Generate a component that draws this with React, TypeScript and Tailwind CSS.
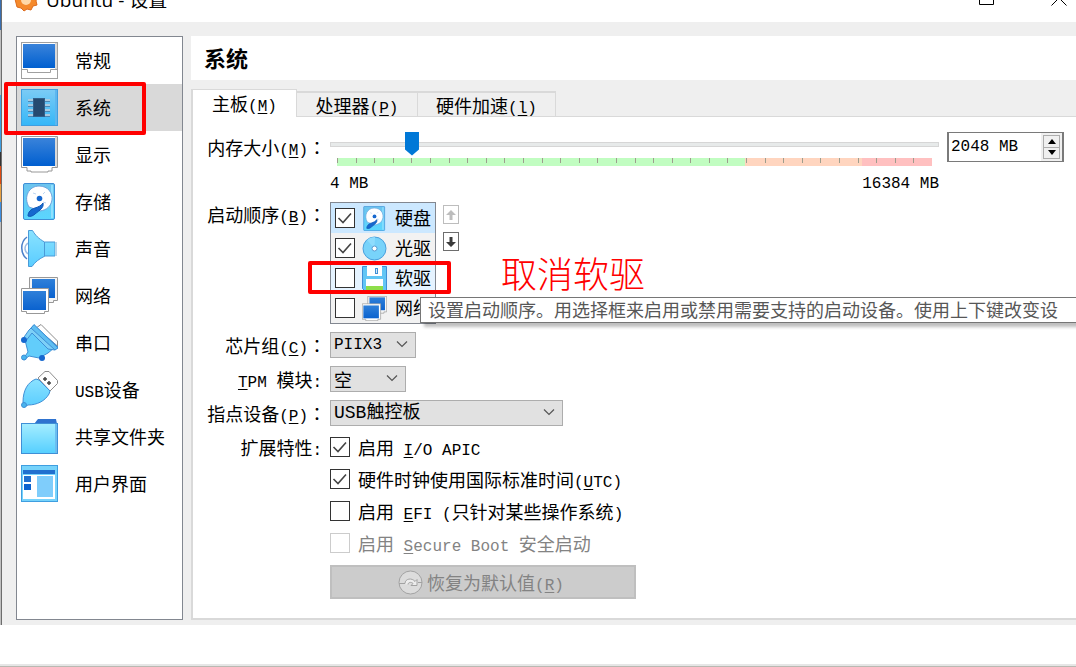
import { ReactNode, useState } from "react";
import clsx from "clsx";

const DiskIcon = ({ className }: { className?: string }) => (
  <svg viewBox="0 0 37 37" className={className}>
    <defs>
      <linearGradient id="disk" x1="0" y1="0" x2="0" y2="1">
        <stop offset="0" stopColor="#6cc4ee" />
        <stop offset="1" stopColor="#5ad6ff" />
      </linearGradient>
    </defs>
    <rect x="2.5" y="0.5" width="31" height="36" rx="1.5" fill="url(#disk)" stroke="#3f8fd6" />
    <path d="M31 2v33" stroke="#8fe0ff" strokeWidth="2" />
    <path d="M8 24C2 14 8 3 18 3c9 0 14 7 13 14-1 6-5 10-12 11z" fill="#fff" stroke="#6aa2dc" />
    <path d="M22 20c1 5-3 7-8 11-2 2-5 3-7 2 0-4 3-7 7-8 3-1 6-2 8-5z" fill="#1668cf" stroke="#0f57b4" />
    <circle cx="18.500" cy="15.500" r="2.800" fill="#1668cf" />
    <path d="M12 10l3 1M24 9l-2 2M25 20l-3-1" stroke="#bcd6f2" />
  </svg>
);

const NetworkIcon = ({ className }: { className?: string }) => (
  <svg viewBox="0 0 37 37" className={className}>
    <defs>
      <linearGradient id="net" x1="0" y1="0" x2="0" y2="1">
        <stop offset="0" stopColor="#2f80d9" />
        <stop offset="1" stopColor="#0a62cf" />
      </linearGradient>
    </defs>
    <path d="M8.500 0.500h28v23h-4v2h-12v-2h-12z" fill="#f5f5f5" stroke="#989898" />
    <rect x="11" y="2" width="23" height="19" fill="url(#net)" />
    <path d="M0.500 11.500h27v23h-4v2h-18v-2h-5z" fill="#fff" stroke="#989898" />
    <rect x="2" y="14" width="23" height="19" fill="url(#net)" />
  </svg>
);

const GeneralIcon = () => (
  <svg viewBox="0 0 37 37" className="size-[37px]">
    <defs>
      <linearGradient id="screen" x1="0" y1="0" x2="0" y2="1">
        <stop offset="0" stopColor="#3a83da" />
        <stop offset="1" stopColor="#005fd0" />
      </linearGradient>
    </defs>
    <rect x="0.500" y="0.500" width="36" height="36" fill="#fff" stroke="#a0a0a0" />
    <rect x="34" y="1" width="2" height="26" fill="#d9d9d9" />
    <rect x="2" y="2" width="32" height="24" fill="url(#screen)" />
    <path d="M0 27.500h6.500v3h23v-3H37" fill="none" stroke="#a0a0a0" />
  </svg>
);

const ChipIcon = () => (
  <svg viewBox="0 0 37 37" className="size-[37px]">
    <defs>
      <linearGradient id="chip" x1="0" y1="0" x2="0" y2="1">
        <stop offset="0" stopColor="#7ccbf5" />
        <stop offset="1" stopColor="#34b7f8" />
      </linearGradient>
    </defs>
    <rect x="0.500" y="0.500" width="36" height="36" fill="url(#chip)" stroke="#3f9ee0" />
    <path d="M35 1v35" stroke="#5db6ee" strokeWidth="2" />
    <path d="M7 11h22M7 16h22M7 21h22M7 26h22" stroke="#a9c9df" strokeWidth="2" />
    <path d="M7 12.500h22M7 17.500h22M7 22.500h22M7 27.500h22" stroke="#4a87b5" />
    <rect x="12.500" y="9.500" width="11" height="18" fill="#254a70" stroke="#325f8a" />
  </svg>
);

const DisplayIcon = () => (
  <svg viewBox="0 0 37 37" className="size-[37px]">
    <path d="M0.500 0.500h36v31H31v3.500h-4v1H10v-1H6v-3.500H0.500z" fill="#fff" stroke="#989898" />
    <path d="M35 1v30" stroke="#d9d9d9" strokeWidth="2" />
    <rect x="2" y="2" width="32" height="28" fill="url(#screen)" />
  </svg>
);

const AudioIcon = () => (
  <svg viewBox="0 0 37 37" className="size-[37px]">
    <defs>
      <linearGradient id="audio" x1="0" y1="0" x2="0" y2="1">
        <stop offset="0" stopColor="#8ae2ff" />
        <stop offset="1" stopColor="#5acdff" />
      </linearGradient>
    </defs>
    <path d="M6 7C-1 12-1 24 6 29" fill="none" stroke="#4a7fc9" strokeWidth="1.500" />
    <path d="M7 13c-4 3-4 8 0 11" fill="none" stroke="#9dbde6" strokeWidth="1.500" />
    <path d="M7.500 0.500h4c3 5 6 8 12 11.500h10.500v14H24c-6 3-10 6-13 10.500H7.500z" fill="url(#audio)" stroke="#4b9ad8" />
    <path d="M23.500 12v14" stroke="#4b9ad8" />
    <path d="M35 12v14" stroke="#bcd6e8" strokeWidth="2" />
  </svg>
);

const SerialIcon = () => (
  <svg viewBox="0 0 37 37" className="size-[37px]">
    <path d="M15 4l5-3.500L36.500 17v5z" fill="#fff" stroke="#8c8c8c" />
    <path d="M2 35l5-7-3-12L14 4l19 20-6 5-9 5-10-2-5 4z" fill="#62cdfb" stroke="#3f8fd6" />
    <path d="M8 6l5-5 24 22-3 3-7-1L11 9l-7 9-3-2z" fill="#7dd0f7" stroke="#3f8fd6" />
    <path d="M13 0.500L37 24l-3 2L10 4z" fill="#60bff2" stroke="#3f8fd6" />
    <circle cx="3" cy="16" r="3" fill="#1668cf" />
    <circle cx="21" cy="34" r="3" fill="#1668cf" />
    <circle cx="3" cy="33.500" r="2.500" fill="#49b4ee" stroke="#3f8fd6" />
  </svg>
);

const UsbIcon = () => (
  <svg viewBox="0 0 37 37" className="size-[37px]">
    <path d="M17 7l7-6.500h4l8.500 9v3L29 20z" fill="#fff" stroke="#8c8c8c" />
    <path d="M22 8h4M24 6v4M26 12h4M28 10v4" stroke="#444" strokeWidth="1.500" />
    <path d="M2 31C2 19 7 11 15 8l3 1 11 11-1 3c-4 7-12 11-21 11l-4 2z" fill="url(#audio)" stroke="#3f8fd6" />
    <circle cx="3" cy="34" r="2.500" fill="#49b4ee" stroke="#3f8fd6" />
  </svg>
);

const FolderIcon = () => (
  <svg viewBox="0 0 37 37" className="size-[37px]">
    <defs>
      <linearGradient id="folder" x1="0" y1="0" x2="0" y2="1">
        <stop offset="0" stopColor="#a5edff" />
        <stop offset="1" stopColor="#55cfff" />
      </linearGradient>
    </defs>
    <path d="M13 6l4-5h18l1 5z" fill="#2f73cf" />
    <rect x="0.500" y="5.500" width="36" height="30" fill="url(#folder)" stroke="#3f8fd6" />
    <path d="M35 6v29" stroke="#6bbdf0" strokeWidth="2" />
  </svg>
);

const InterfaceIcon = () => (
  <svg viewBox="0 0 37 37" className="size-[37px]">
    <rect x="0.500" y="0.500" width="36" height="36" fill="#76d3fb" stroke="#3f9ee0" />
    <rect x="2" y="5" width="32" height="4" fill="#2170cf" />
    <rect x="2" y="10" width="32" height="24" fill="#fff" />
    <rect x="3" y="11" width="7" height="6" fill="#2170cf" />
    <rect x="3" y="19" width="7" height="6" fill="#0a62cf" />
    <rect x="16" y="11" width="16" height="21" fill="#7fcdfb" />
  </svg>
);

const CdIcon = () => (
  <svg viewBox="0 0 25 25" className="size-[25px]">
    <circle cx="12.500" cy="12.500" r="11.500" fill="#78d3fa" stroke="#4a9fdc" />
    <path d="M12.500 12.500L5 4a11 11 0 0 1 8-3z" fill="#8edcfd" />
    <circle cx="12.500" cy="12.500" r="2.500" fill="#fff" stroke="#5a9bd0" />
  </svg>
);

const FloppyIcon = () => (
  <svg viewBox="0 0 25 25" className="size-[25px]">
    <path d="M0.500 0.500h24v24H2.500l-2-2z" fill="#62c6f5" stroke="#3f8fd6" />
    <rect x="5" y="0" width="15" height="10" fill="#fff" />
    <rect x="13.500" y="2.500" width="2" height="5" fill="#d8ecfa" stroke="#3f8fd6" />
    <rect x="4" y="13" width="17" height="11" fill="#fff" />
    <rect x="4" y="20" width="17" height="4" fill="#8ede4a" />
  </svg>
);

const RestoreIcon = () => (
  <svg viewBox="0 0 25 25" className="size-[25px]">
    <circle cx="12.500" cy="12.500" r="11.500" fill="#dcdcdc" stroke="#a2a2a2" />
    <path d="M1 13.500h6c0-5 7-6 10-2l2-2v6h-6l2-2c-2-2-5-1-5 1" fill="#ededed" stroke="#a2a2a2" />
    <path d="M24 12.500h-4" fill="none" stroke="#a2a2a2" />
  </svg>
);

const sections = [
  { name: "常规", icon: <GeneralIcon /> },
  { name: "系统", icon: <ChipIcon /> },
  { name: "显示", icon: <DisplayIcon /> },
  { name: "存储", icon: <DiskIcon className="size-[37px]" /> },
  { name: "声音", icon: <AudioIcon /> },
  { name: "网络", icon: <NetworkIcon className="size-[37px]" /> },
  { name: "串口", icon: <SerialIcon /> },
  { name: "USB设备", icon: <UsbIcon /> },
  { name: "共享文件夹", icon: <FolderIcon /> },
  { name: "用户界面", icon: <InterfaceIcon /> },
];

const bootDevices = [
  { name: "硬盘", icon: <DiskIcon className="size-[25px]" />, enabled: true, row: "bg-[#cce8ff]" },
  { name: "光驱", icon: <CdIcon />, enabled: true, row: "bg-[#f2f2f2]" },
  { name: "软驱", icon: <FloppyIcon />, enabled: false, row: "bg-[#e5f3ff]" },
  { name: "网络", icon: <NetworkIcon className="size-[25px]" />, enabled: false, row: "bg-[#f2f2f2]" },
];

const Latin = ({ children }: { children: ReactNode }) => (
  <span className="font-['Liberation_Mono',monospace] text-base leading-none whitespace-pre">{children}</span>
);

// the accelerator key shown after a label, e.g. (M)
const Key = ({ children }: { children: string }) => (
  <Latin>
    (<u className="underline-offset-2">{children}</u>)
  </Latin>
);

const Colon = () => <span className="font-['Noto_Sans_CJK_TC',sans-serif]" lang="zh-TW">：</span>;

const Tick = ({ id, defaultChecked, disabled }: { id: string; defaultChecked?: boolean; disabled?: boolean }) => (
  <span className="relative size-5 shrink-0">
    <input
      type="checkbox"
      id={id}
      defaultChecked={defaultChecked}
      disabled={disabled}
      className="peer block size-5 appearance-none border border-[#333] bg-white disabled:border-[#cccccc]"
    />
    <svg viewBox="0 0 20 20" className="pointer-events-none absolute inset-0 hidden size-5 peer-checked:block">
      <path d="M3.500 10l4.500 4.500 8-9" fill="none" stroke="#444" strokeWidth="1.600" />
    </svg>
  </span>
);

const Select = ({ id, options, className }: { id: string; options: string[]; className: string }) => (
  <div className={clsx("relative h-[26px]", className)}>
    <select
      id={id}
      className="block h-full w-full appearance-none border border-[#adadad] bg-[#e1e1e1] pl-[3px] leading-6"
    >
      {options.map((option) => (
        <option key={option}>{option}</option>
      ))}
    </select>
    <svg viewBox="0 0 12 8" className="pointer-events-none absolute top-2 right-2 h-2 w-3">
      <path d="M1 1.500l5 5 5-5" fill="none" stroke="#555" strokeWidth="1.200" />
    </svg>
  </div>
);

const Feature = ({
  id,
  checked,
  disabled,
  children,
}: {
  id: string;
  checked?: boolean;
  disabled?: boolean;
  children: ReactNode;
}) => (
  <div className="flex h-8 items-center gap-2">
    <Tick id={id} defaultChecked={checked} disabled={disabled} />
    <label htmlFor={id} className={clsx("whitespace-nowrap", disabled && "text-[#838383]")}>
      {children}
    </label>
  </div>
);

const TitleBar = () => (
  <header className="h-[22px] overflow-hidden bg-white">
    <div className="-mt-3.5 flex h-7 items-center pr-[9px] pl-3">
      <svg viewBox="0 0 24 24" className="size-6">
        <path
          d="M12 1l3 3 4-1 1 4 3 2-1 4 1 4-4 1-2 4-4-1-3 2-3-3-4-1-1-4-1-4 2-3 1-4 4 0z"
          fill="#f58a2c"
          stroke="#dd6a1c"
        />
        <circle cx="12" cy="12" r="5" fill="#ffd9a8" />
      </svg>
      <h1 className="ml-2 flex-1 font-['Open_Sans','Noto_Sans_CJK_SC',sans-serif] text-[19px] leading-7">
        Ubuntu - 设置
      </h1>
      <div className="flex gap-14 pb-1">
        <button type="button" aria-label="最大化">
          <svg viewBox="0 0 16 16" className="size-4">
            <path d="M0.500 0.500h14v14h-14z" fill="none" stroke="#000" />
          </svg>
        </button>
        <button type="button" aria-label="关闭">
          <svg viewBox="0 0 16 16" className="size-4">
            <path d="M0.500 0.500l15 15M15.500 0.500l-15 15" fill="none" stroke="#000" />
          </svg>
        </button>
      </div>
    </div>
  </header>
);

const Sidebar = () => {
  const [active, setActive] = useState(1);

  return (
    <nav className="w-[167px] shrink-0 border border-[#828790] bg-white">
      {sections.map((section, index) => (
        <div key={section.name} className="relative">
          <button
            type="button"
            onClick={() => setActive(index)}
            className={clsx(
              "flex h-[47px] w-full items-center gap-[17px] pl-1 text-left whitespace-nowrap",
              index === active && "bg-[#d9d9d9]"
            )}
          >
            {section.icon}
            <span className="pb-0.5">
              {section.name === "USB设备" ? <><Latin>USB</Latin>设备</> : section.name}
            </span>
          </button>
          {section.name === "系统" && (
            <div className="pointer-events-none absolute -top-0.5 -left-[13px] z-10 h-[53px] w-[142px] rounded-xs border-4 border-[#ff0000]" />
          )}
        </div>
      ))}
    </nav>
  );
};

const MemoryRow = () => {
  const [memory, setMemory] = useState(2048);

  const step = (amount: number) => {
    setMemory(Math.min(16384, Math.max(4, memory + amount)));
  };

  return (
    <div className="flex gap-2 pr-3">
      <div className="min-w-0 flex-1">
        <input
          type="range"
          id="memory"
          min={4}
          max={16384}
          value={memory}
          onChange={(e) => setMemory(Number(e.target.value))}
          className="block h-6 w-full appearance-none bg-transparent [&::-webkit-slider-runnable-track]:h-[5px] [&::-webkit-slider-runnable-track]:border [&::-webkit-slider-runnable-track]:border-[#d6d6d6] [&::-webkit-slider-runnable-track]:bg-[#e7eaea] [&::-webkit-slider-thumb]:-mt-[11px] [&::-webkit-slider-thumb]:h-6 [&::-webkit-slider-thumb]:w-3.5 [&::-webkit-slider-thumb]:appearance-none [&::-webkit-slider-thumb]:bg-[#0078d7] [&::-webkit-slider-thumb]:[clip-path:polygon(0_0,100%_0,100%_75%,50%_100%,0_75%)]"
        />
        <div className="mx-[7px] mt-0.5 flex h-2 bg-[linear-gradient(to_right,#c1fdc1_68.5%,#ffd5bf_68.5%,#ffd5bf_88.2%,#ffc0c0_88.2%)]">
          {Array.from({ length: 32 }, (_, index) => (
            <div key={index} className="h-[5px] flex-1 border-l border-[#9d9d8d]" />
          ))}
        </div>
        <div className="mt-1.5 flex h-6 items-center justify-between">
          <Latin>4 MB</Latin>
          <Latin>16384 MB</Latin>
        </div>
      </div>
      <div className="flex h-[30px] w-[117px] border border-x-2 border-[#7a7a7a] bg-white">
        <input
          type="text"
          aria-label="内存大小"
          value={`${memory} MB`}
          onChange={(e) => setMemory(parseInt(e.target.value) || 4)}
          className="w-[92px] pl-0.5 font-['Liberation_Mono',monospace] text-base outline-none"
        />
        <div className="flex flex-1 flex-col bg-[#f0f0f0] p-0.5">
          <button type="button" aria-label="增加" onClick={() => step(4)} className="flex flex-1 items-center justify-center border border-[#adadad]">
            <svg viewBox="0 0 8 5" className="h-[5px] w-2"><path d="M4 0l4 5H0z" /></svg>
          </button>
          <button type="button" aria-label="减少" onClick={() => step(-4)} className="-mt-px flex flex-1 items-center justify-center border border-[#adadad]">
            <svg viewBox="0 0 8 5" className="h-[5px] w-2"><path d="M4 5l4-5H0z" /></svg>
          </button>
        </div>
      </div>
    </div>
  );
};

const BootOrder = () => (
  <div className="relative flex gap-[7px]">
    <ul className="w-[106px] border border-[#828790] bg-white">
      {bootDevices.map((device, index) => (
        <li key={device.name} className={clsx("relative flex h-[30px] items-center pl-1", device.row)}>
          <Tick id={`boot-${index}`} defaultChecked={device.enabled} />
          <label htmlFor={`boot-${index}`} className="ml-[7px] flex items-center gap-2 whitespace-nowrap">
            {device.icon}
            <span className="pb-0.5">{device.name}</span>
          </label>
          {device.name === "软驱" && (
            <div className="pointer-events-none absolute -top-0.5 -left-[23px] z-10 h-[33px] w-[143px] rounded-xs border-4 border-[#ff0000]" />
          )}
        </li>
      ))}
    </ul>
    <div className="flex flex-col gap-2 pt-[3px]">
      <button type="button" aria-label="上移" disabled className="flex h-[19px] w-4 items-center justify-center border border-[#bdbdbd] bg-white">
        <svg viewBox="0 0 10 10" className="size-2.5"><path d="M5 0l5 5H6.500v5h-3V5H0z" fill="#bdbdbd" /></svg>
      </button>
      <button type="button" aria-label="下移" className="flex h-[19px] w-4 items-center justify-center border border-[#6d6d6d] bg-white">
        <svg viewBox="0 0 10 10" className="size-2.5"><path d="M5 10l5-5H6.500V0h-3v5H0z" fill="#3c3c3c" /></svg>
      </button>
    </div>
    <p className="absolute top-12 left-[171px] text-4xl leading-[44px] font-light whitespace-nowrap text-[#ff0000]">
      取消软驱
    </p>
    <div
      role="tooltip"
      className="absolute top-[95px] left-[90px] z-10 h-[26px] w-screen border border-[#767676] bg-white pl-[7px] leading-[22px] whitespace-nowrap text-[#575757] shadow-[4px_4px_3px_rgba(0,0,0,0.25)]"
    >
      设置启动顺序。用选择框来启用或禁用需要支持的启动设备。使用上下键改变设
    </div>
  </div>
);

const Field = ({ label, htmlFor, className, children }: { label: ReactNode; htmlFor?: string; className?: string; children: ReactNode }) => (
  <div className="grid grid-cols-[133px_minmax(0,1fr)] gap-x-1">
    <label htmlFor={htmlFor} className={clsx("flex items-center justify-end whitespace-nowrap", className)}>
      <span>{label}</span>
    </label>
    {children}
  </div>
);

const tabs = [
  { name: "主板", key: "M", width: "w-[106px]" },
  { name: "处理器", key: "P", width: "w-[121px]" },
  { name: "硬件加速", key: "l", width: "w-[138px]" },
];

const SystemSettings = () => {
  const [tab, setTab] = useState(0);

  return (
    <main className="flex min-w-0 flex-1 flex-col">
      <h2 className="h-11 bg-white pl-[13px] text-[22px] leading-[42px] font-bold">系统</h2>
      <div className="flex h-[37px] items-end" role="tablist">
        {tabs.map((item, index) => (
          <button
            key={item.name}
            type="button"
            role="tab"
            aria-selected={tab === index}
            onClick={() => setTab(index)}
            className={clsx(
              "border-[#d9d9d9] pb-0.5 whitespace-nowrap",
              item.width,
              tab === index ? "z-10 h-7 border border-b-0 border-l-2 bg-white" : "h-[26px] border-t-2 border-r"
            )}
          >
            {item.name}
            <Key>{item.key}</Key>
          </button>
        ))}
      </div>
      <form className="-mt-px flex flex-col border-t border-b-2 border-l-2 border-[#d9d9d9] bg-white pt-[15px] pb-[19px]">
        <Field htmlFor="memory" className="h-[30px]" label={<>内存大小<Key>M</Key><Colon /></>}>
          <MemoryRow />
        </Field>
        <div className="mt-1.5">
          <Field className="h-6" label={<>启动顺序<Key>B</Key><Colon /></>}>
            <BootOrder />
          </Field>
        </div>
        <div className="mt-2 flex flex-col gap-2">
          <Field htmlFor="chipset" label={<>芯片组<Key>C</Key><Colon /></>}>
            <Select id="chipset" options={["PIIX3", "ICH9"]} className="w-[86px] font-['Liberation_Mono',monospace] text-base" />
          </Field>
          <Field
            htmlFor="tpm"
            className="pr-1"
            label={<><Latin><u className="underline-offset-2">T</u>PM </Latin>模块<Latin>:</Latin></>}
          >
            <Select id="tpm" options={["空", "1.2", "2.0"]} className="w-[76px]" />
          </Field>
          <Field htmlFor="pointing" label={<>指点设备<Key>P</Key><Colon /></>}>
            <Select
              id="pointing"
              options={["USB触控板", "PS/2鼠标"]}
              className="w-[233px] font-['Liberation_Mono','Noto_Sans_CJK_SC',monospace]"
            />
          </Field>
        </div>
        <div className="mt-[5px]">
          <Field className="h-8 pr-1" label={<>扩展特性<Latin>:</Latin></>}>
            <div>
              <Feature id="apic" checked>
                启用<Latin> <u className="underline-offset-2">I</u>/O APIC</Latin>
              </Feature>
              <Feature id="utc" checked>
                硬件时钟使用国际标准时间<Latin>(<u className="underline-offset-2">U</u>TC)</Latin>
              </Feature>
              <Feature id="efi">
                启用<Latin> <u className="underline-offset-2">E</u>FI (</Latin>只针对某些操作系统<Latin>)</Latin>
              </Feature>
              <Feature id="secure-boot" disabled>
                启用<Latin> <u className="underline-offset-2">S</u>ecure Boot </Latin>安全启动
              </Feature>
              <button
                type="button"
                disabled
                className="mt-1.5 flex h-[34px] w-[306px] items-center justify-center border-2 border-[#bfbfbf] bg-[#cccccc] pr-1 text-[#838383]"
              >
                <RestoreIcon />
                <span className="ml-1">恢复为默认值<Key>R</Key></span>
              </button>
            </div>
          </Field>
        </div>
      </form>
    </main>
  );
};

const App = () => (
  <div className="min-h-screen overflow-hidden bg-white font-['Noto_Sans_CJK_SC',sans-serif] text-lg leading-6 text-black" lang="zh-CN">
    <div className="flex">
      <div className="w-0.5 shrink-0 border-r border-[#6d6d6d] bg-[linear-gradient(to_bottom,#3a6fb0_0_30px,#c0c0c0_30px_95px,#3f9ee0_95px_152px,#333_152px_166px,#e04a10_166px_184px,#e8a040_184px_202px,#3f8fe0_202px_222px,#c0c0c0_222px)]" />
      <div className="min-w-0 flex-1 bg-[#efefef]">
        <TitleBar />
        <div className="flex gap-2 pt-3.5 pb-[5px] pl-3.5">
          <Sidebar />
          <SystemSettings />
        </div>
      </div>
    </div>
    <footer className="mt-[39px] h-[3px] border-b border-[#b9b9b2] bg-[#e6e6e6]" />
  </div>
);

export default App;
